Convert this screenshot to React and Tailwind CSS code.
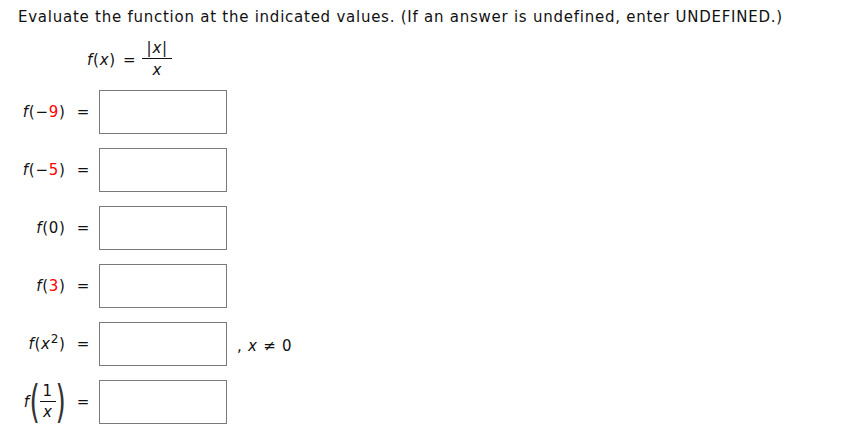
import React from "react";

const font = { fontFamily: '"DejaVu Sans", Verdana, sans-serif' };

function Box() {
  return <div className="w-[128px] h-[44px] border border-[#7a7a7a] bg-white" />;
}

function Row({ label, extra }) {
  return (
    <div className="flex items-center h-[44px]">
      <div className="w-[90px] flex justify-end items-center whitespace-nowrap">
        {label}
        <span className="ml-[11px]">=</span>
      </div>
      <div className="ml-[9px]">
        <Box />
      </div>
      {extra}
    </div>
  );
}

const F = () => <i className="italic">f</i>;

export default function App() {
  return (
    <div className="w-[868px] h-[441px] bg-white text-[15px] tracking-[0.75px] text-[#111] leading-none" style={font}>
      <div className="pl-[18px] pt-[10px] h-[20px]">
        Evaluate the function at the indicated values. (If an answer is undefined, enter UNDEFINED.)
      </div>
      <div className="flex items-center ml-[87px] mt-[22px] h-[34px]">
        <span className="mt-[2px]"><F />(<i>x</i>)</span>
        <span className="ml-[7px] mt-[2px]">=</span>
        <span className="ml-[6px] inline-flex flex-col items-center">
          <span className="px-[2px] pb-[2px]">|<i>x</i>|</span>
          <span className="w-[30px] border-t border-[#111]" />
          <span className="pt-[4px]"><i>x</i></span>
        </span>
      </div>
      <div className="mt-[14px] flex flex-col gap-[14px]">
        <Row label={<span><F />(−<span className="text-[#f00]">9</span>)</span>} />
        <Row label={<span><F />(−<span className="text-[#f00]">5</span>)</span>} />
        <Row label={<span><F />(0)</span>} />
        <Row label={<span><F />(<span className="text-[#f00]">3</span>)</span>} />
        <Row
          label={<span><F />(<i>x</i><sup className="text-[12px] relative -top-[6px]">2</sup>)</span>}
          extra={<span className="ml-[10px] mt-[4px] whitespace-nowrap">, <i>x</i> ≠ 0</span>}
        />
        <Row
          label={
            <span className="inline-flex items-center">
              <F />
              <span className="text-[44px] font-normal text-[#333] scale-x-[0.6] -mx-[4px] inline-block leading-none">(</span>
              <span className="inline-flex flex-col items-center text-[15px]">
                <span className="pb-[2px]">1</span>
                <span className="w-[16px] border-t border-[#111]" />
                <span className="pt-[3px]"><i>x</i></span>
              </span>
              <span className="text-[44px] font-normal text-[#333] scale-x-[0.6] -mx-[4px] inline-block leading-none">)</span>
            </span>
          }
        />
      </div>
    </div>
  );
}
